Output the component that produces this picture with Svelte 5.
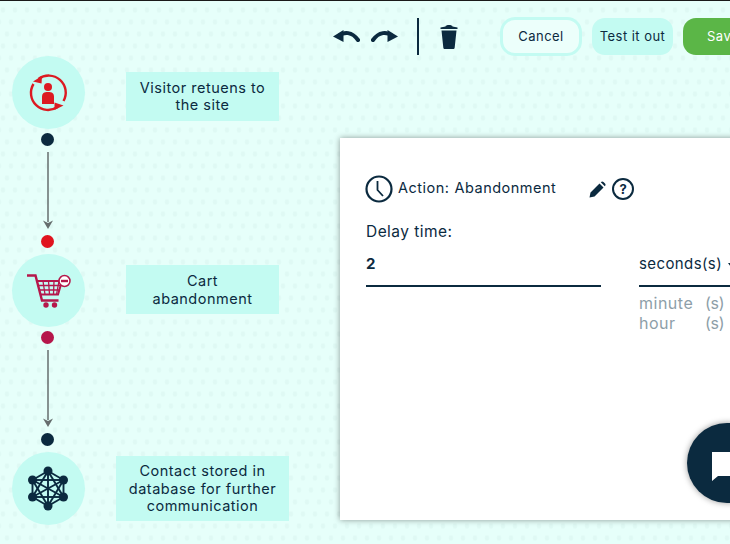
<script>
  const steps = [
    { label: "Visitor retuens to the site", icon: "return", dot: "#0b2a3f", next: "#e0141f", wide: false },
    { label: "Cart abandonment", icon: "cart", dot: "#b5174b", next: "#0b2a3f", wide: false },
    { label: "Contact stored in database for further communication", icon: "network", wide: true }
  ];
  const hex = [[24, 6], [8.5, 15], [39.5, 15], [8.5, 32], [39.5, 32], [24, 41]];
  const links = [];
  hex.forEach((a, i) => hex.slice(i + 1).forEach((b) => links.push([a, b])));
</script>

<main class="page">
  <header class="toolbar">
    <svg class="arrow-btn" viewBox="0 0 27 14" width="27" height="14" aria-label="Undo">
      <path d="M6 7C11 2.500 19 2.500 25 11" fill="none" stroke="#0b2a3f" stroke-width="4" stroke-linecap="round"/>
      <path d="M0 7.500L10.500 1V13Z" fill="#0b2a3f"/>
    </svg>
    <svg class="arrow-btn" viewBox="0 0 27 14" width="27" height="14" aria-label="Redo">
      <path d="M21 7C16 2.500 8 2.500 2 11" fill="none" stroke="#0b2a3f" stroke-width="4" stroke-linecap="round"/>
      <path d="M27 7.500L16.500 1V13Z" fill="#0b2a3f"/>
    </svg>
    <span class="divider"></span>
    <svg class="trash" viewBox="0 0 18 25" width="18" height="25" aria-label="Delete">
      <path d="M5.500 2.500C5.500 0.500 12.500 0.500 12.500 2.500L17.500 3.500V5H0.500V3.500Z" fill="#0b2a3f"/>
      <path d="M1.500 6.500H16.500L14.700 23.500C14.600 24.500 14 25 13 25H5C4 25 3.400 24.500 3.300 23.500Z" fill="#0b2a3f"/>
    </svg>
    <button class="btn cancel">Cancel</button>
    <button class="btn test">Test it out</button>
    <button class="btn save">Save</button>
  </header>

  <div class="body">
    <section class="flow">
      {#each steps as step, i}
        <div class="step">
          <div class="circle">
            {#if step.icon === "return"}
              <svg viewBox="0 0 40 40" width="40" height="40">
                <path d="M10.500 6A17 17 0 0 1 35.500 28" fill="none" stroke="#dc1a22" stroke-width="2.400"/>
                <path d="M29.500 34A17 17 0 0 1 5.500 11" fill="none" stroke="#dc1a22" stroke-width="2.400"/>
                <path d="M5 8.500L14 3L13.500 10.500Z" fill="#dc1a22"/>
                <path d="M35.500 32.500L26.500 37L26.500 29.500Z" fill="#dc1a22"/>
                <circle cx="20" cy="14" r="4" fill="#dc1a22"/>
                <path d="M14 24C14 20 16 19 20 19C24 19 26 20 26 24V31H14Z" fill="#dc1a22"/>
              </svg>
            {:else if step.icon === "cart"}
              <svg class="cart" viewBox="0 0 46 36" width="46" height="36">
                <g fill="none" stroke="#b5174b">
                  <path d="M1 2.500H9.500L16 27.500H32.500" stroke-width="2.400"/>
                  <path d="M11.500 8H36L32 21.500H15" stroke-width="2"/>
                  <path d="M12.500 12.500H35M14 17H33.500M17 8L19 21.500M22.500 8L23.500 21.500M28 8L27.500 21.500M33 8L30.500 21.500" stroke-width="1.300"/>
                </g>
                <circle cx="20" cy="32" r="2.700" fill="#b5174b"/>
                <circle cx="28.500" cy="32" r="2.700" fill="#b5174b"/>
                <circle cx="38.500" cy="8" r="5.500" fill="#fff" stroke="#b5174b" stroke-width="1.500"/>
                <path d="M35 8H42" stroke="#b5174b" stroke-width="2.400"/>
              </svg>
            {:else}
              <svg viewBox="0 0 48 47" width="48" height="47">
                {#each links as [a, b]}
                  <line x1={a[0]} y1={a[1]} x2={b[0]} y2={b[1]} stroke="#0b2a3f" stroke-width="1.900"/>
                {/each}
                {#each hex as p}
                  <circle cx={p[0]} cy={p[1]} r="4.500" fill="#0b2a3f"/>
                {/each}
              </svg>
            {/if}
          </div>
          <p class="label" class:wide={step.wide}>{step.label}</p>
        </div>
        {#if i < steps.length - 1}
          <div class="link">
            <span class="dot" style="background: {step.dot}"></span>
            <svg class="arrow" viewBox="0 0 12 77" width="12" height="77">
              <path d="M6 0V70" stroke="#666e6e" stroke-width="1.500"/>
              <path d="M1 68.500L6 71L11 68.500L6 77Z" fill="#666e6e"/>
            </svg>
            <span class="dot" style="background: {step.next}"></span>
          </div>
        {/if}
      {/each}
    </section>

    <section class="card">
      <div class="title">
        <svg viewBox="0 0 28 28" width="28" height="28">
          <circle cx="14" cy="14" r="12.500" fill="none" stroke="#0b2a3f" stroke-width="2.200"/>
          <path d="M12.500 6V15L18 21" fill="none" stroke="#0b2a3f" stroke-width="1.800"/>
        </svg>
        <span class="action">Action:</span>
        <span class="name">Abandonment</span>
        <svg class="pencil" viewBox="0 0 17 17" width="17" height="17">
          <path d="M0.500 16.500L1.500 11.500L10.500 2.500L14.500 6.500L5.500 15.500ZM11.800 1.200C12.800 0.200 13.600 0.200 14.500 1L16 2.500C16.800 3.400 16.800 4.200 15.800 5.200Z" fill="#0b2a3f"/>
        </svg>
        <span class="help">?</span>
      </div>
      <div class="field-label">Delay time:</div>
      <div class="fields">
        <div class="field number">2</div>
        <div class="unit">
          <div class="field select">seconds(s) <i class="caret"></i></div>
          <ul>
            <li><span>minute</span><span class="suffix">(s)</span></li>
            <li><span>hour</span><span class="suffix">(s)</span></li>
          </ul>
        </div>
      </div>
    </section>
  </div>

  <button class="chat" aria-label="Chat">
    <svg viewBox="0 0 30 29" width="30" height="29">
      <path d="M0 0H30V24H6L0 29Z" fill="#fff"/>
    </svg>
  </button>
</main>

<style>
  :global(body) {
    margin: 0;
  }
  .page {
    position: relative;
    box-sizing: border-box;
    width: 730px;
    height: 544px;
    overflow: hidden;
    border-top: 1px solid #1a1a1a;
    font-family: "Inter", "Open Sans", sans-serif;
    color: #0b2a3f;
    background-color: #e6fffa;
    background-image:
      radial-gradient(ellipse 2.800px 3.500px at 6px 6px, #dff9f4 55%, transparent 100%),
      radial-gradient(ellipse 2.800px 3.500px at 6px 6px, #dff9f4 55%, transparent 100%),
      radial-gradient(ellipse 2.800px 3.500px at 6px 6px, #dff9f4 55%, transparent 100%);
    background-size: 12px 36px;
    background-position: 1px 27px, -3px 3px, -7px 15px;
  }
  .toolbar {
    display: flex;
    align-items: center;
    height: 40px;
    margin-top: 15px;
    padding-left: 333px;
    white-space: nowrap;
  }
  .arrow-btn {
    margin-right: 11px;
    flex: none;
  }
  .divider {
    flex: none;
    width: 2px;
    height: 37px;
    margin: 0 21px 0 8px;
    background: #0b2a3f;
  }
  .trash {
    flex: none;
    margin-right: 42px;
  }
  .btn {
    flex: none;
    box-sizing: border-box;
    height: 37px;
    padding: 0;
    border: 0;
    border-radius: 13px;
    font: 400 13px "Inter", sans-serif;
    letter-spacing: 0.45px;
    color: #0b2a3f;
  }
  .cancel {
    width: 82px;
    height: 39px;
    margin-right: 10px;
    background: #ecfffb;
    border: 3px solid #c3fbf2;
    border-radius: 15px;
  }
  .test {
    width: 81px;
    margin-right: 10px;
    background: #c3fbf2;
  }
  .save {
    width: 80px;
    background: #5bb647;
    color: #fff;
  }
  .body {
    display: flex;
    align-items: flex-start;
    height: 489px;
  }
  .flow {
    flex: none;
    width: 340px;
    box-sizing: border-box;
    padding-left: 11.500px;
  }
  .step {
    display: flex;
    align-items: center;
    height: 73px;
  }
  .step:first-child .label {
    margin-top: 7px;
  }
  .step:nth-child(3) .label {
    margin-bottom: 2px;
  }
  .circle {
    flex: none;
    display: flex;
    align-items: center;
    justify-content: center;
    width: 73px;
    height: 73px;
    border-radius: 50%;
    background: #c3fbf2;
  }
  .cart {
    margin-left: 2px;
  }
  .label {
    width: 153px;
    box-sizing: border-box;
    margin: 0 0 0 41.500px;
    padding: 7px 10px;
    background: #c3fbf2;
    font-size: 14.500px;
    line-height: 17.500px;
    letter-spacing: 0.5px;
    text-align: center;
    color: #0b2a3f;
  }
  .label.wide {
    width: 173px;
    margin-left: 31.500px;
    padding: 6px 8px;
  }
  .link {
    display: flex;
    flex-direction: column;
    align-items: center;
    width: 13px;
    margin-left: 29.500px;
    padding: 4px 0 6px;
  }
  .dot {
    flex: none;
    width: 13px;
    height: 13px;
    border-radius: 50%;
  }
  .arrow {
    flex: none;
    margin: 6px 0 6px;
  }
  .card {
    flex: none;
    box-sizing: border-box;
    width: 500px;
    height: 382px;
    margin-top: 82px;
    padding: 37px 25px;
    background: #fff;
    box-shadow: 0 0 6px rgba(0, 0, 0, 0.4);
  }
  .title {
    display: flex;
    align-items: center;
    height: 28px;
    font-size: 14.500px;
    letter-spacing: 0.5px;
  }
  .action {
    margin: 0 0 3px 5px;
  }
  .name {
    width: 135px;
    margin: 0 0 3px 5px;
  }
  .pencil {
    flex: none;
  }
  .help {
    flex: none;
    box-sizing: border-box;
    width: 22px;
    height: 22px;
    margin-left: 6px;
    border: 2px solid #0b2a3f;
    border-radius: 50%;
    font-size: 13px;
    font-weight: 700;
    line-height: 18px;
    text-align: center;
  }
  .field-label {
    margin: 19px 0 0 1px;
    font-size: 15.500px;
    line-height: 20px;
    letter-spacing: 0.45px;
  }
  .fields {
    display: flex;
    margin: 11px 0 0 1px;
  }
  .field {
    box-sizing: border-box;
    height: 34px;
    line-height: 22px;
    border-bottom: 2px solid #0b2a3f;
    font-size: 15px;
  }
  .number {
    flex: none;
    width: 235px;
    font-weight: 700;
  }
  .unit {
    flex: none;
    width: 200px;
    margin-left: 38px;
  }
  .select {
    letter-spacing: 0.4px;
  }
  .caret {
    display: inline-block;
    margin-left: 1px;
    vertical-align: 2px;
    border: 3px solid transparent;
    border-top: 4px solid #0b2a3f;
    border-bottom: 0;
  }
  ul {
    margin: 6px 0 0;
    padding: 0;
    list-style: none;
    color: #8d9ea8;
    font-size: 16px;
    line-height: 20px;
    letter-spacing: 0.5px;
  }
  li {
    display: flex;
  }
  li span:first-child {
    width: 66px;
  }
  .suffix {
    letter-spacing: -0.3px;
  }
  .chat {
    position: absolute;
    left: 687px;
    top: 422px;
    display: flex;
    align-items: center;
    width: 80px;
    height: 80px;
    padding: 7px 0 0 25px;
    border: 0;
    border-radius: 50%;
    background: #0b2a3f;
    box-shadow: 0 0 6px rgba(0, 0, 0, 0.4);
  }
</style>
